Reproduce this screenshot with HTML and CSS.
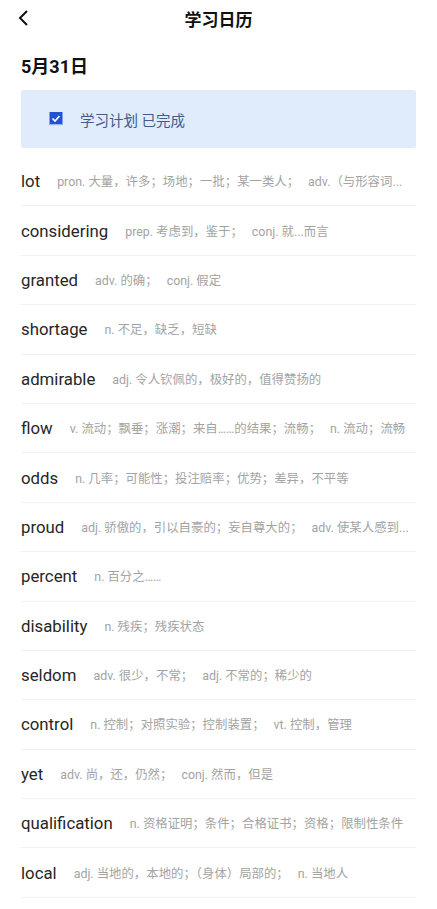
FILE: index.html
```html
<!DOCTYPE html>
<html lang="zh">
<head>
<meta charset="utf-8">
<link rel="stylesheet" href="styles.css">
</head>
<body>
<div class="page">
  <header class="nav">
    <svg class="back" width="14" height="18" viewBox="0 0 14 18"><path d="M10 2 L3 9 L10 16" fill="none" stroke="#111" stroke-width="2"/></svg>
    <div class="title">学习日历</div>
  </header>
  <h1 class="date">5月31日</h1>
  <div class="card">
    <svg class="check" width="14" height="14" viewBox="0 0 14 14"><rect x="0.5" y="0" width="13" height="13" fill="#2352d1"/><path d="M3.5 6.5 L6 9 L10.5 4" fill="none" stroke="#fff" stroke-width="1.6"/><rect x="0.5" y="12" width="13" height="1.2" fill="#9fb6ee"/></svg>
    <span class="card-text">学习计划 已完成</span>
  </div>
  <ul class="list">
    <li class="row"><span class="word">lot</span><span class="def">pron. 大量，许多；场地；一批；某一类人；</span><span class="def">adv.（与形容词...</span></li>
    <li class="row"><span class="word">considering</span><span class="def">prep. 考虑到，鉴于；</span><span class="def">conj. 就...而言</span></li>
    <li class="row"><span class="word">granted</span><span class="def">adv. 的确；</span><span class="def">conj. 假定</span></li>
    <li class="row"><span class="word">shortage</span><span class="def">n. 不足，缺乏，短缺</span></li>
    <li class="row"><span class="word">admirable</span><span class="def">adj. 令人钦佩的，极好的，值得赞扬的</span></li>
    <li class="row"><span class="word">flow</span><span class="def">v. 流动；飘垂；涨潮；来自……的结果；流畅；</span><span class="def">n. 流动；流畅</span></li>
    <li class="row"><span class="word">odds</span><span class="def">n. 几率；可能性；投注赔率；优势；差异，不平等</span></li>
    <li class="row"><span class="word">proud</span><span class="def">adj. 骄傲的，引以自豪的；妄自尊大的；</span><span class="def">adv. 使某人感到...</span></li>
    <li class="row"><span class="word">percent</span><span class="def">n. 百分之……</span></li>
    <li class="row"><span class="word">disability</span><span class="def">n. 残疾；残疾状态</span></li>
    <li class="row"><span class="word">seldom</span><span class="def">adv. 很少，不常；</span><span class="def">adj. 不常的；稀少的</span></li>
    <li class="row"><span class="word">control</span><span class="def">n. 控制；对照实验；控制装置；</span><span class="def">vt. 控制，管理</span></li>
    <li class="row"><span class="word">yet</span><span class="def">adv. 尚，还，仍然；</span><span class="def">conj. 然而，但是</span></li>
    <li class="row"><span class="word">qualification</span><span class="def">n. 资格证明；条件；合格证书；资格；限制性条件</span></li>
    <li class="row"><span class="word">local</span><span class="def">adj. 当地的，本地的；（身体）局部的；</span><span class="def">n. 当地人</span></li>
  </ul>
</div>
</body>
</html>
```
FILE: styles.css
```css
* { box-sizing: border-box; }
html, body { margin: 0; padding: 0; background: #fff; }
body {
  font-family: Roboto, "Noto Sans CJK SC", sans-serif;
  color: #222;
  width: 437px;
  overflow: hidden;
}
.page { padding: 0 21px; }
.nav {
  height: 37px;
  display: flex;
  align-items: center;
  justify-content: center;
  position: relative;
}
.back { position: absolute; left: -4px; top: 9px; }
.title {
  font-size: 17px;
  font-weight: 700;
  color: #111;
}
.date {
  margin: 17px 0 0;
  font-size: 18px;
  font-weight: 700;
  color: #111;
  line-height: 25px;
}
.card {
  margin-top: 11px;
  height: 58px;
  background: #e0ecfb;
  border-radius: 2px;
  display: flex;
  align-items: center;
  padding-left: 28px;
}
.check { flex: none; }
.card-text {
  margin-left: 17px;
  font-size: 14.5px;
  color: #3f5c8c;
}
.list {
  list-style: none;
  margin: 9px 0 0;
  padding: 0;
}
.row {
  height: 49.4px;
  border-bottom: 1px solid #f1f1f1;
  display: flex;
  align-items: center;
  white-space: nowrap;
  overflow: hidden;
}
.word {
  font-size: 16.8px;
  color: #262626;
  margin-right: 17px;
}
.def {
  font-size: 12.4px;
  color: #a3a3a3;
  margin-right: 9px;
}
```
